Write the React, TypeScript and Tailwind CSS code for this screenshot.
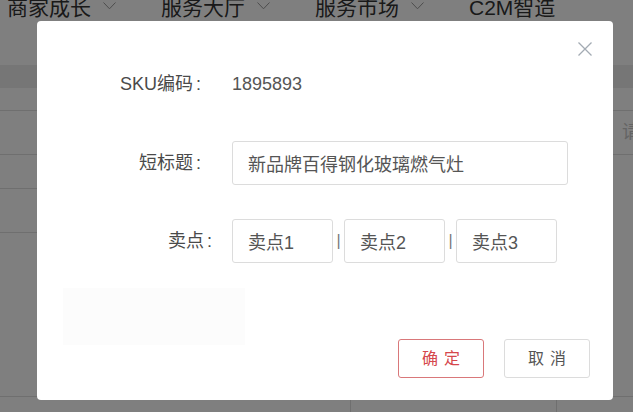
const navItems = ["商家成长", "服务大厅", "服务市场", "C2M智造"];

function Chevron() {
  return (
    <svg width="13" height="8" viewBox="0 0 13 8" fill="none" className="ml-[12px] mt-[-7px] shrink-0">
      <path d="M0.5 0.5 L6.5 6.8 L12.5 0.5" stroke="#9a9a9a" strokeWidth="1" />
    </svg>
  );
}

function Label({ text, pad }: { text: string; pad: string }) {
  return (
    <div className={`flex w-[195px] shrink-0 justify-end text-[#4a4a4a] ${pad}`}>
      <span>{text}</span>
      <span className="ml-[3px]">:</span>
    </div>
  );
}

function Field({ value, width }: { value: string; width: string }) {
  return (
    <input
      readOnly
      defaultValue={value}
      className={`h-[44px] ${width} rounded-[3px] border border-[#dcdcdc] bg-white pl-[15px] text-[18px] text-[#555] outline-none`}
    />
  );
}

export default function App() {
  return (
    <div
      className="relative h-[412px] w-[633px] overflow-hidden bg-white"
      style={{ fontFamily: '"Liberation Sans", "Noto Sans CJK SC", sans-serif' }}
    >
      {/* page behind the dialog */}
      <div className="flex flex-col">
        <div className="flex h-[22px] items-start overflow-hidden pl-[7px]">
          {navItems.map((item, i) => (
            <div key={item} className="flex w-[154px] shrink-0 items-center">
              <span className="mt-[-3px] text-[21px] leading-[22px] whitespace-nowrap text-[#333]">{item}</span>
              {i < navItems.length - 1 ? <Chevron /> : null}
            </div>
          ))}
        </div>
        <div className="h-[43px]" />
        <div className="h-[23px] bg-[#ececec]" />
        <div className="flex h-[308px]">
          <div className="flex w-[320px] shrink-0 flex-col">
            <div className="h-[23px] border-b border-[#dedede]" />
            <div className="h-[44px] border-b border-[#dedede]" />
            <div className="h-[34px] border-b border-[#dedede]" />
            <div className="h-[44px] border-b border-[#dedede]" />
          </div>
          <div className="flex min-w-0 flex-1 flex-col overflow-hidden">
            <div className="h-[23px] border-b border-[#dedede]" />
            <div className="flex h-[44px] items-center border-b border-[#dedede] text-[18px] text-[#c8c8c8]">
              <span className="ml-[302px] shrink-0 whitespace-nowrap">请输入</span>
            </div>
          </div>
        </div>
        <div className="flex h-[16px] border-t border-[#dedede]">
          <div className="w-[351px] border-r border-[#dedede]" />
          <div className="w-[206px] border-r border-[#dedede]" />
          <div className="flex-1" />
        </div>
      </div>

      <div className="absolute inset-0 bg-black/50" />

      {/* dialog */}
      <div className="absolute left-[37px] top-[21px] flex h-[379px] w-[576px] flex-col rounded-[4px] bg-white pt-[41px] text-[18px]">
        <button className="absolute left-[541px] top-[21px]">
          <svg width="14" height="14" viewBox="0 0 14 14" fill="none">
            <path d="M0.5 0.5 L13.5 13.5 M13.5 0.5 L0.5 13.5" stroke="#a3abb3" strokeWidth="1.3" />
          </svg>
        </button>

        <div className="flex h-[44px] items-center">
          <Label text="SKU编码" pad="pr-[31px]" />
          <span className="text-[#555]">1895893</span>
        </div>

        <div className="mt-[35px] flex h-[44px] items-center">
          <Label text="短标题" pad="pr-[31px]" />
          <Field value="新品牌百得钢化玻璃燃气灶" width="w-[336px]" />
        </div>

        <div className="mt-[34px] flex h-[44px] items-center">
          <Label text="卖点" pad="pr-[20px]" />
          <Field value="卖点1" width="w-[101px]" />
          <span className="w-[11px] text-center text-[16px] text-[#777]">|</span>
          <Field value="卖点2" width="w-[101px]" />
          <span className="w-[11px] text-center text-[16px] text-[#777]">|</span>
          <Field value="卖点3" width="w-[101px]" />
        </div>

        <div className="mt-[25px] flex items-start justify-between pl-[26px] pr-[23px]">
          <div className="h-[57px] w-[182px] bg-[#fcfcfc]" />
          <div className="mt-[51px] flex gap-[20px]">
            <button className="flex h-[39px] w-[86px] items-center justify-center rounded-[3px] border border-[#d9787a] pl-[6px] text-[16px] tracking-[6px] text-[#d5474c]">
              确定
            </button>
            <button className="flex h-[39px] w-[86px] items-center justify-center rounded-[3px] border border-[#dcdcdc] pl-[6px] text-[16px] tracking-[6px] text-[#555]">
              取消
            </button>
          </div>
        </div>
      </div>
    </div>
  );
}
